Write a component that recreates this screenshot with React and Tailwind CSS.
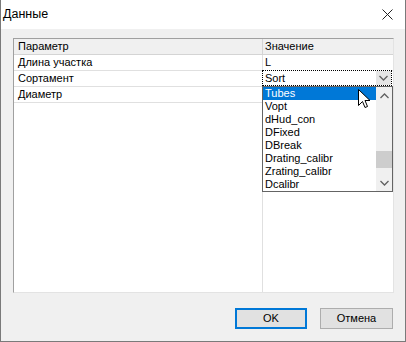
import React from 'react';

const rows = [
  { name: 'Длина участка', value: 'L' },
  { name: 'Сортамент', value: '' },
  { name: 'Диаметр', value: '' },
];

const items = ['Tubes', 'Vopt', 'dHud_con', 'DFixed', 'DBreak', 'Drating_calibr', 'Zrating_calibr', 'Dcalibr'];

const Chevron = ({ up }) => (
  <svg width="9" height="6" viewBox="0 0 9 6" className="block">
    <path d={up ? 'M0.5 5 L4.5 1 L8.5 5' : 'M0.5 1 L4.5 5 L8.5 1'} fill="none" stroke="#606060" strokeWidth="1.3" />
  </svg>
);

const App = () => {
  return (
    <div className="relative w-[406px] h-[342px] flex flex-col bg-[#f0f0f0] border-l border-r border-b border-[#7a7a7a] font-['Liberation_Sans',Arial,sans-serif] text-[11px] text-black select-none">
      {/* title bar */}
      <div className="h-[29px] bg-white flex items-center justify-between pl-[2px] pr-[12px]">
        <span className="text-[12.5px] leading-none">Данные</span>
        <svg width="11" height="11" viewBox="0 0 11 11">
          <path d="M0.5 0.5 L10.5 10.5 M10.5 0.5 L0.5 10.5" stroke="#222" strokeWidth="1" />
        </svg>
      </div>

      {/* grid */}
      <div className="pt-[9px] pl-[12px] pr-[11px]">
        <div className="relative h-[255px] bg-white border-t border-l border-[#a0a0a0] border-r border-r-[#e3e3e3] border-b border-b-[#e3e3e3] flex flex-col">
          <div className="flex h-[16px] bg-[#f0f0f0] border-b border-[#d4d4d4] leading-[15px]">
            <div className="w-[249px] border-r border-[#d4d4d4] pl-[4px]">Параметр</div>
            <div className="flex-1 pl-[2px]">Значение</div>
          </div>
          {rows.map((r) => (
            <div key={r.name} className="flex h-[16px] border-b border-[#e0e0e0] leading-[15px]">
              <div className="w-[249px] border-r border-[#e0e0e0] pl-[4px]">{r.name}</div>
              <div className="flex-1 pl-[2px]">{r.value}</div>
            </div>
          ))}
          <div className="flex flex-1">
            <div className="w-[249px] border-r border-[#e0e0e0]" />
            <div className="flex-1" />
          </div>

          {/* combo editor */}
          <div className="absolute left-[248px] top-[31px] w-[130px] h-[16px] border border-dotted border-black bg-white flex items-center">
            <span className="pl-[2px] flex-1 leading-[14px]">Sort</span>
            <div className="w-[15px] h-[14px] bg-[#e5e5e5] flex items-center justify-center">
              <Chevron />
            </div>
          </div>

          {/* dropdown list */}
          <div className="absolute left-[248px] top-[47px] w-[131px] h-[106px] border border-[#646464] bg-white flex">
            <div className="flex-1 flex flex-col">
              {items.map((it, i) => (
                <div
                  key={it}
                  className={
                    i === 0
                      ? 'h-[13px] leading-[13px] pl-[2px] bg-[#0078d7] text-white'
                      : 'h-[13px] leading-[13px] pl-[2px]'
                  }
                >
                  {it}
                </div>
              ))}
            </div>
            <div className="w-[16px] bg-[#f0f0f0] flex flex-col items-center">
              <div className="h-[17px] w-full flex items-center justify-center">
                <Chevron up />
              </div>
              <div className="h-[47px]" />
              <div className="h-[17px] w-full bg-[#cdcdcd]" />
              <div className="flex-1" />
              <div className="h-[17px] w-full flex items-center justify-center">
                <Chevron />
              </div>
            </div>
          </div>

          {/* mouse cursor */}
          <svg className="absolute left-[344px] top-[50px]" width="13" height="21" viewBox="0 0 13 21">
            <path
              d="M0.5 0.5 L0.5 16.5 L4.5 12.5 L7 18.5 L9.5 17.5 L7 11.5 L12 11.5 Z"
              fill="white"
              stroke="black"
              strokeWidth="1"
              strokeLinejoin="miter"
            />
          </svg>
        </div>
      </div>

      {/* buttons */}
      <div className="flex justify-end gap-[13px] pt-[15px] pr-[12px]">
        <button className="w-[72px] h-[21px] bg-[#e1e1e1] border-2 border-[#0078d7] text-[11px] leading-none">OK</button>
        <button className="w-[73px] h-[21px] bg-[#e1e1e1] border border-[#adadad] text-[11px] leading-none">Отмена</button>
      </div>
    </div>
  );
};

export default App;
